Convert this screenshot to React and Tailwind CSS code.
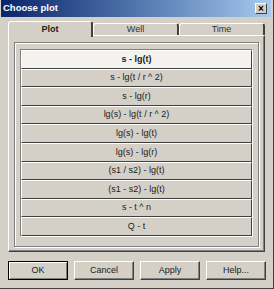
const rows = [
  "s - lg(t)",
  "s - lg(t / r ^ 2)",
  "s - lg(r)",
  "lg(s) - lg(t / r ^ 2)",
  "lg(s) - lg(t)",
  "lg(s) - lg(r)",
  "(s1 / s2) - lg(t)",
  "(s1 - s2) - lg(t)",
  "s - t ^ n",
  "Q - t",
];

function Tab({ label, active }) {
  return active ? (
    <div className="relative z-10 w-[85px] h-[16px] mb-[-2px] border-t border-l border-r-2 border-white border-r-[#404040] rounded-tl-[3px] rounded-tr-[3px] bg-[#d4d0c8] flex items-center justify-center font-bold text-[#202020]">
      {label}
    </div>
  ) : (
    <div className="w-[86px] h-[12px] mt-[2px] border-t border-l border-r-2 border-white border-r-[#404040] rounded-tl-[3px] rounded-tr-[3px] flex items-center justify-center text-[#303030]">
      {label}
    </div>
  );
}

function Button({ label, isDefault }) {
  return (
    <button
      className={`w-[60px] h-[19px] bg-[#d4d0c8] text-[9px] text-[#202020] flex items-center justify-center ${
        isDefault
          ? "border border-black shadow-[inset_1px_1px_#fff,inset_-1px_-1px_#808080]"
          : "border border-t-white border-l-white border-r-[#404040] border-b-[#404040] shadow-[inset_-1px_-1px_#808080]"
      }`}
    >
      {label}
    </button>
  );
}

export default function App() {
  return (
    <div
      className="w-[274px] h-[289px] bg-[#d4d0c8] flex flex-col border-r border-b border-[#404040] text-[9px] text-[#202020]"
      style={{ fontFamily: '"Liberation Sans", Arial, sans-serif' }}
    >
      {/* title bar */}
      <div className="h-[17px] ml-[1px] mr-[2px] flex items-center justify-between pl-[2px] pr-[2px] bg-gradient-to-r from-[#0a246a] to-[#a6caf0]">
        <span className="text-white font-bold text-[9.5px]">Choose plot</span>
        <div className="w-[12px] h-[11px] mr-[2px] bg-[#d4d0c8] border border-t-white border-l-white border-r-[#404040] border-b-[#404040] flex items-center justify-center text-[10px] font-bold leading-none text-black">
          ×
        </div>
      </div>

      {/* tabs */}
      <div className="ml-[8px] mt-[4px] flex items-start">
        <Tab label="Plot" active />
        <Tab label="Well" />
        <Tab label="Time" />
      </div>

      {/* tab panel */}
      <div className="mx-[8px] h-[217px] border-t border-l border-white border-r border-b border-r-[#404040] border-b-[#404040] shadow-[inset_-1px_-1px_#808080] pt-[6px] px-[5px] pb-[4px]">
        <div className="h-full border border-[#808080] shadow-[1px_1px_#fff,inset_1px_1px_#fff] pt-[6px] px-[5px]">
          <div className="border-t border-l border-[#808080] border-r border-b border-r-white border-b-white">
            {rows.map((r, i) => (
              <div
                key={r}
                className={`h-[18.6px] flex items-center justify-center border-t border-l border-white border-b border-r border-b-[#404040] border-r-[#404040] ${
                  i === 0 ? "bg-[#f3f2ee] font-bold" : "bg-[#d4d0c8]"
                }`}
              >
                {r}
              </div>
            ))}
          </div>
        </div>
      </div>

      {/* buttons */}
      <div className="mt-[9px] ml-[8px] flex gap-[6px]">
        <Button label="OK" isDefault />
        <Button label="Cancel" />
        <Button label="Apply" />
        <Button label="Help..." />
      </div>
    </div>
  );
}
